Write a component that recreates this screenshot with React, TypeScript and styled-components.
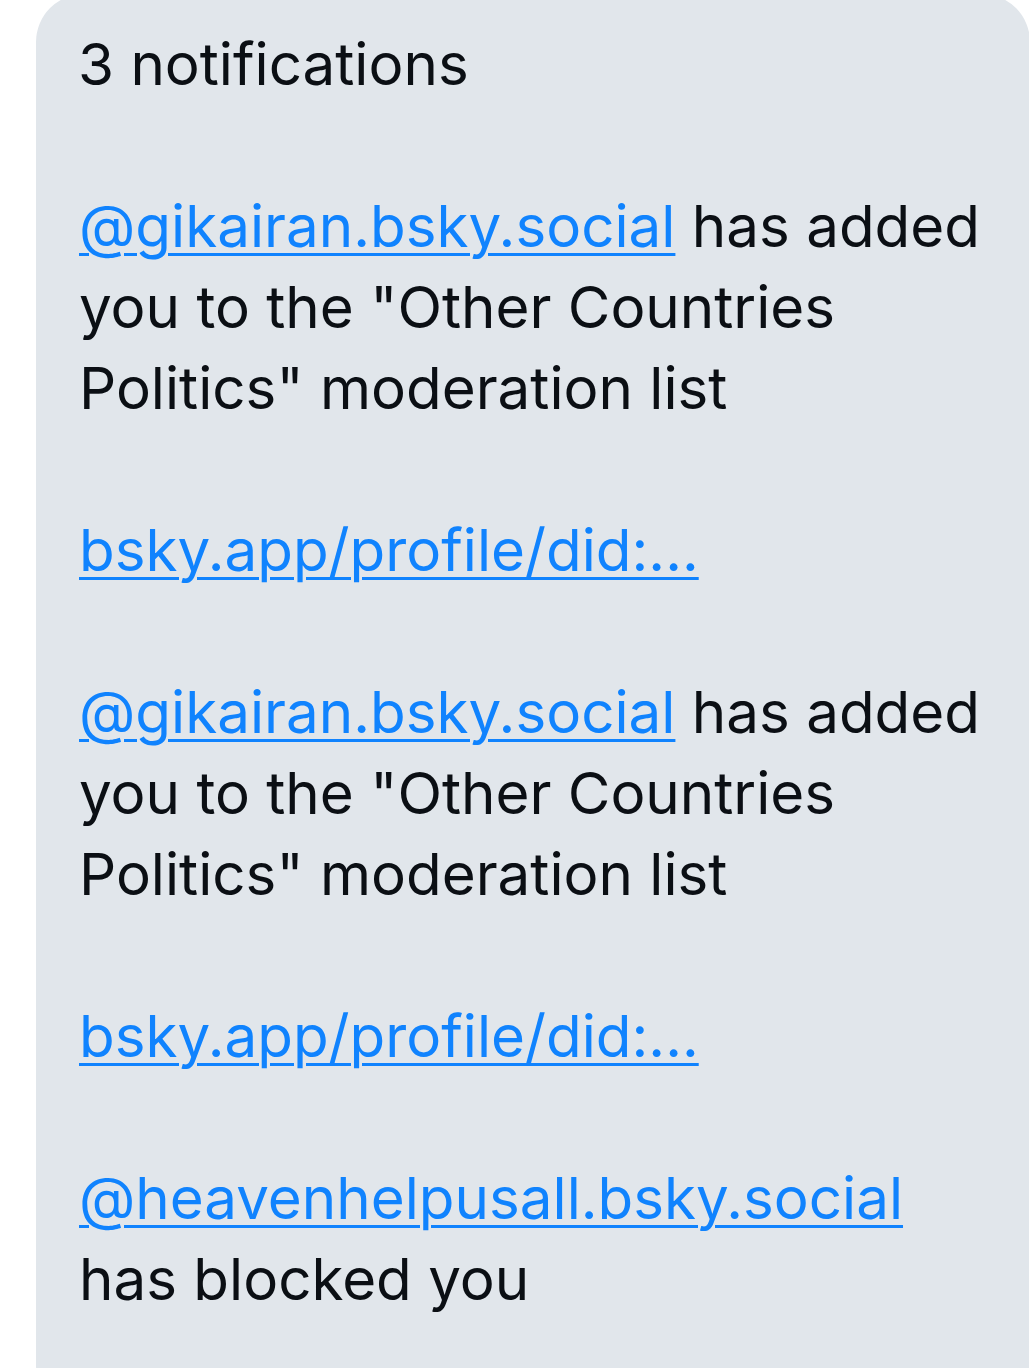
import React from "react";
import styled, { createGlobalStyle } from "styled-components";

const Global = createGlobalStyle`
  html, body {
    margin: 0;
    padding: 0;
    background: #ffffff;
    overflow: hidden;
  }
`;

const Page = styled.div`
  display: flex;
  flex-direction: column;
  align-items: flex-start;
  min-height: 1368px;
`;

const Bubble = styled.div`
  box-sizing: border-box;
  margin: -6px 0 0 36px;
  width: 994px;
  min-height: 1420px;
  padding: 30px 42px 60px 43px;
  background: #e1e6eb;
  border-radius: 48px;
  font-family: Inter, "Noto Sans", sans-serif;
  font-size: 58.3px;
  line-height: 81px;
  color: #0b0f14;
  white-space: pre-wrap;
`;

const Text = styled.span`
  margin-left: -1px;
`;

const Link = styled.a`
  color: #1083fe;
  text-decoration: underline;
  text-decoration-thickness: 3px;
  text-underline-offset: 6px;
`;

const items = [
  { handle: "@gikairan.bsky.social", text: ' has added you to the "Other Countries Politics" moderation list', url: "bsky.app/profile/did:..." },
  { handle: "@gikairan.bsky.social", text: ' has added you to the "Other Countries Politics" moderation list', url: "bsky.app/profile/did:..." },
];

export default function App() {
  return (
    <Page>
      <Global />
      <Bubble>
        <Text>
          {"3 notifications\n\n"}
          {items.map((it, i) => (
            <React.Fragment key={i}>
              <Link href="#">{it.handle}</Link>
              {it.text}
              {"\n\n"}
              <Link href="#">{it.url}</Link>
              {"\n\n"}
            </React.Fragment>
          ))}
          <Link href="#">@heavenhelpusall.bsky.social</Link>
          {" has blocked you"}
        </Text>
      </Bubble>
    </Page>
  );
}
